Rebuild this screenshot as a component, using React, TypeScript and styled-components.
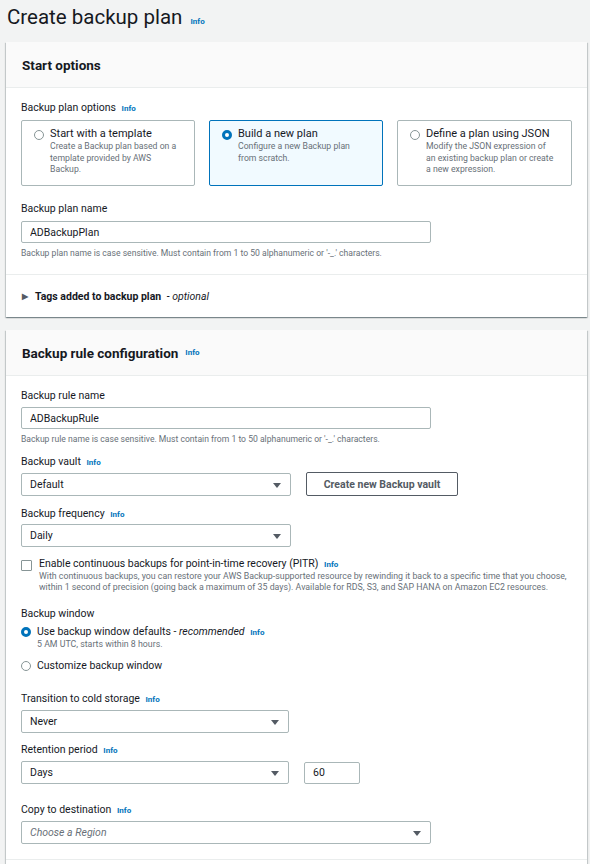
import React from 'react';
import styled, { createGlobalStyle } from 'styled-components';

const GlobalStyle = createGlobalStyle`
  body {
    margin: 0;
    background: #f2f3f3;
    font-family: Roboto, "Liberation Sans", Arial, sans-serif;
    color: #16191f;
  }
`;

type Tile = { title: string; text: string; checked?: boolean };

const tiles: Tile[] = [
  {
    title: 'Start with a template',
    text: 'Create a Backup plan based on a template provided by AWS Backup.',
  },
  {
    title: 'Build a new plan',
    text: 'Configure a new Backup plan from scratch.',
    checked: true,
  },
  {
    title: 'Define a plan using JSON',
    text: 'Modify the JSON expression of an existing backup plan or create a new expression.',
  },
];

const App = (): React.ReactElement => {
  const [planName, setPlanName] = React.useState('ADBackupPlan');
  const [ruleName, setRuleName] = React.useState('ADBackupRule');
  const [days, setDays] = React.useState('60');

  return (
    <>
      <GlobalStyle />
      <Page>
        <TitleRow>
          <Title>Create backup plan</Title>
          <Info>Info</Info>
        </TitleRow>

        <Card>
          <CardHeader>
            <h2>Start options</h2>
          </CardHeader>
          <CardBody>
            <Label>
              Backup plan options <Info>Info</Info>
            </Label>
            <Tiles>
              {tiles.map(t => (
                <TileBox key={t.title} $checked={t.checked}>
                  <Radio $checked={t.checked} />
                  <div>
                    <TileTitle>{t.title}</TileTitle>
                    <TileText>{t.text}</TileText>
                  </div>
                </TileBox>
              ))}
            </Tiles>

            <Field $top={16} $gap={5}>
              <Label>Backup plan name</Label>
              <TextInput
                value={planName}
                onChange={e => setPlanName(e.target.value)}
                style={{ width: 410 }}
              />
              <Hint>
                Backup plan name is case sensitive. Must contain from 1 to 50 alphanumeric or
                '-_.' characters.
              </Hint>
            </Field>
          </CardBody>
          <Expander>
            <Caret>▶</Caret>
            Tags added to backup plan <Optional>- optional</Optional>
          </Expander>
        </Card>

        <Card>
          <CardHeader>
            <h2>Backup rule configuration</h2>
            <Info>Info</Info>
          </CardHeader>
          <CardBody>
            <Field $top={0}>
              <Label>Backup rule name</Label>
              <TextInput
                value={ruleName}
                onChange={e => setRuleName(e.target.value)}
                style={{ width: 410 }}
              />
              <Hint>
                Backup rule name is case sensitive. Must contain from 1 to 50 alphanumeric or
                '-_.' characters.
              </Hint>
            </Field>

            <Field $top={10} $gap={3}>
              <Label>
                Backup vault <Info>Info</Info>
              </Label>
              <Row>
                <Select $width={270}>Default</Select>
                <Button>Create new Backup vault</Button>
              </Row>
            </Field>

            <Field $top={11} $gap={3}>
              <Label>
                Backup frequency <Info>Info</Info>
              </Label>
              <Select $width={270}>Daily</Select>
            </Field>

            <CheckRow>
              <CheckBox />
              <div>
                <OptionText>
                  Enable continuous backups for point-in-time recovery (PITR) <Info>Info</Info>
                </OptionText>
                <OptionHint>
                  With continuous backups, you can restore your AWS Backup-supported resource by
                  rewinding it back to a specific time that you choose, within 1 second of
                  precision (going back a maximum of 35 days). Available for RDS, S3, and SAP HANA
                  on Amazon EC2 resources.
                </OptionHint>
              </div>
            </CheckRow>

            <Field $top={14}>
              <Label>Backup window</Label>
              <RadioGroup>
                <RadioRow>
                  <Radio $checked />
                  <div>
                    <OptionText>
                      Use backup window defaults - <em>recommended</em> <Info>Info</Info>
                    </OptionText>
                    <OptionHint>5 AM UTC, starts within 8 hours.</OptionHint>
                  </div>
                </RadioRow>
                <RadioRow>
                  <Radio />
                  <OptionText>Customize backup window</OptionText>
                </RadioRow>
              </RadioGroup>
            </Field>

            <Field $top={19}>
              <Label>
                Transition to cold storage <Info>Info</Info>
              </Label>
              <Select $width={268}>Never</Select>
            </Field>

            <Field $top={10}>
              <Label>
                Retention period <Info>Info</Info>
              </Label>
              <Row>
                <Select $width={268}>Days</Select>
                <TextInput
                  value={days}
                  onChange={e => setDays(e.target.value)}
                  style={{ width: 56 }}
                />
              </Row>
            </Field>

            <Field $top={19}>
              <Label>
                Copy to destination <Info>Info</Info>
              </Label>
              <Select $width={410} $placeholder>
                Choose a Region
              </Select>
            </Field>
          </CardBody>
          <Divider />
        </Card>
      </Page>
    </>
  );
};

const Page = styled.div`
  width: 581px;
  padding: 0 0 20px 6px;
`;

const TitleRow = styled.div`
  height: 42px;
  display: flex;
  align-items: baseline;
  gap: 5px;
  padding-left: 1px;
`;

const Title = styled.h1`
  margin: 0;
  font-size: 20.5px;
  font-weight: 400;
  line-height: 34px;
  color: #16191f;
`;

const Info = styled.span`
  font-size: 8px;
  line-height: 1;
  font-weight: 700;
  color: #0073bb;
  margin-left: 3px;
`;

const Card = styled.section`
  background: #fff;
  box-shadow: 0 1px 1px 0 rgba(0, 28, 36, 0.3), 1px 1px 1px 0 rgba(0, 28, 36, 0.15),
    -1px 1px 1px 0 rgba(0, 28, 36, 0.15);
  margin-bottom: 13px;
`;

const CardHeader = styled.header`
  height: 46px;
  box-sizing: border-box;
  background: #fafafa;
  border-bottom: 1px solid #eaeded;
  padding: 0 16px;
  display: flex;
  align-items: center;
  gap: 4px;
  h2 {
    margin: 0;
    font-size: 13.5px;
    font-weight: 700;
    color: #16191f;
  }
`;

const CardBody = styled.div`
  padding: 13px 14px 15px 15px;
`;

const Label = styled.div`
  font-size: 10.5px;
  line-height: 14px;
  color: #16191f;
`;

const Tiles = styled.div`
  display: grid;
  grid-template-columns: 174px 174px 175px;
  gap: 14px;
  margin-top: 5px;
`;

const TileBox = styled.div<{ $checked?: boolean }>`
  height: 66px;
  box-sizing: border-box;
  border: 1px solid ${p => (p.$checked ? '#0073bb' : '#aab7b8')};
  background: ${p => (p.$checked ? '#f1faff' : '#fff')};
  border-radius: 2px;
  padding: 6px 14px 0 12px;
  display: flex;
  gap: 6px;
  align-items: flex-start;
  > span {
    margin-top: 3px;
  }
`;

const TileTitle = styled.div`
  font-size: 11px;
  line-height: 14px;
  color: #16191f;
`;

const TileText = styled.div`
  font-size: 8.7px;
  line-height: 11.5px;
  color: #687078;
`;

const Radio = styled.span<{ $checked?: boolean }>`
  flex: none;
  display: inline-block;
  box-sizing: border-box;
  width: 10px;
  height: 10px;
  border-radius: 50%;
  border: ${p => (p.$checked ? '3px solid #0073bb' : '1px solid #879596')};
  background: #fff;
`;

const Field = styled.div<{ $top?: number; $gap?: number }>`
  margin-top: ${p => p.$top ?? 10}px;
  > div:first-child {
    margin-bottom: ${p => p.$gap ?? 4}px;
  }
`;

const TextInput = styled.input`
  display: block;
  box-sizing: border-box;
  height: 22px;
  border: 1px solid #aab7b8;
  border-radius: 2px;
  padding: 0 8px;
  font-family: inherit;
  font-size: 10.5px;
  color: #16191f;
  background: #fff;
  outline: none;
`;

const Hint = styled.div`
  margin-top: 5px;
  font-size: 8.6px;
  line-height: 11px;
  color: #687078;
`;

const Expander = styled.div`
  border-top: 1px solid #eaeded;
  height: 42px;
  display: flex;
  align-items: center;
  padding-left: 16px;
  font-size: 10.5px;
  font-weight: 700;
  color: #16191f;
  white-space: pre;
`;

const Divider = styled.div`
  border-top: 1px solid #eaeded;
  height: 30px;
`;

const Caret = styled.span`
  font-size: 8px;
  color: #545b64;
  margin-right: 7px;
`;

const Optional = styled.em`
  font-weight: 400;
  margin-left: 3px;
`;

const Row = styled.div`
  display: flex;
  align-items: center;
  gap: 15px;
`;

const Select = styled.div<{ $width: number; $placeholder?: boolean }>`
  position: relative;
  width: ${p => p.$width}px;
  height: 23px;
  box-sizing: border-box;
  border: 1px solid #aab7b8;
  border-radius: 2px;
  padding: 0 8px;
  display: flex;
  align-items: center;
  font-size: 10.5px;
  color: ${p => (p.$placeholder ? '#687078' : '#16191f')};
  font-style: ${p => (p.$placeholder ? 'italic' : 'normal')};
  &::after {
    content: '';
    position: absolute;
    right: 9px;
    top: 9px;
    border-left: 4px solid transparent;
    border-right: 4px solid transparent;
    border-top: 5px solid #545b64;
  }
`;

const Button = styled.button`
  width: 152px;
  height: 24px;
  box-sizing: border-box;
  border: 1px solid #545b64;
  border-radius: 2px;
  background: #fff;
  font-family: inherit;
  font-size: 10.5px;
  font-weight: 700;
  color: #545b64;
`;

const CheckRow = styled.div`
  margin-top: 10px;
  display: flex;
  gap: 7px;
  align-items: flex-start;
`;

const CheckBox = styled.span`
  flex: none;
  margin-top: 3px;
  width: 9px;
  height: 9px;
  border: 1px solid #879596;
  border-radius: 1px;
  background: #fff;
`;

const OptionText = styled.div`
  font-size: 10.5px;
  line-height: 14px;
  color: #16191f;
`;

const OptionHint = styled.div`
  font-size: 8.8px;
  line-height: 11px;
  color: #687078;
`;

const RadioGroup = styled.div`
  display: flex;
  flex-direction: column;
  gap: 9px;
`;

const RadioRow = styled.div`
  display: flex;
  gap: 6px;
  align-items: flex-start;
  > span {
    margin-top: 2px;
  }
`;

export default App;
